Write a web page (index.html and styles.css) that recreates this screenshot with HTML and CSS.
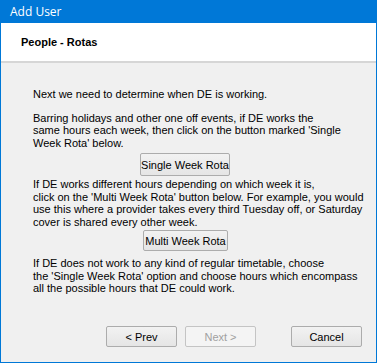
FILE: index.html
```html
<!DOCTYPE html>
<html>
<head>
    <meta charset="UTF-8">
    <title>Add User</title>
    <link rel="stylesheet" href="styles.css">
</head>
<body>
<div class="window">
    <div class="titlebar">Add User</div>

    <div class="header">
        <h1>People - Rotas</h1>
    </div>

    <div class="content">
        <p class="intro">Next we need to determine when DE is working.</p>

        <p>Barring holidays and other one off events, if DE works the<br>
            same hours each week, then click on the button marked 'Single<br>
            Week Rota' below.</p>

        <div class="row single">
            <button class="btn rota">Single Week Rota</button>
        </div>

        <p>If DE works different hours depending on which week it is,<br>
            click on the 'Multi Week Rota' button below. For example, you would<br>
            use this where a provider takes every third Tuesday off, or Saturday<br>
            cover is shared every other week.</p>

        <div class="row multi">
            <button class="btn rota">Multi Week Rota</button>
        </div>

        <p>If DE does not work to any kind of regular timetable, choose<br>
            the 'Single Week Rota' option and choose hours which encompass<br>
            all the possible hours that DE could work.</p>
    </div>

    <div class="footer">
        <button class="btn nav">&lt; Prev</button>
        <button class="btn nav" disabled>Next &gt;</button>
        <button class="btn nav cancel">Cancel</button>
    </div>
</div>
</body>
</html>
```

FILE: styles.css
```css
body {
    margin: 0;
    font-family: "Liberation Sans", Arial, sans-serif;
    background-color: #ffffff;
}

.window {
    width: 377px;
    height: 363px;
    box-sizing: border-box;
    border: 1px solid #0078d7;
    border-top: none;
    background-color: #f0f0f0;
    display: flex;
    flex-direction: column;
}

.titlebar {
    height: 23px;
    background-color: #0078d7;
    color: #ffffff;
    font-family: "Open Sans", "Noto Sans", sans-serif;
    font-size: 12px;
    line-height: 23px;
    padding-left: 9px;
}

.header {
    height: 38px;
    background-color: #ffffff;
    border-bottom: 2px solid #d6d6d6;
    display: flex;
    align-items: center;
    padding-left: 20px;
}

.header h1 {
    margin: 0;
    font-size: 11px;
    font-weight: bold;
    color: #000000;
}

.content {
    padding: 25px 0 0 32px;
    font-size: 11px;
    line-height: 12.5px;
    color: #000000;
}

.content p {
    margin: 0;
}

.intro {
    margin-bottom: 11px !important;
}

.row {
    display: flex;
}

.single {
    padding: 4px 0 2px 107px;
}

.multi {
    padding: 2px 0 6px 110px;
}

.btn {
    font-family: "Liberation Sans", Arial, sans-serif;
    font-size: 11px;
    color: #000000;
    background: linear-gradient(#f2f2f2, #e5e5e5);
    border: 1px solid #acacac;
    border-radius: 2px;
    padding: 0;
    height: 22px;
    white-space: nowrap;
}

.single .btn {
    width: 90px;
    height: 23px;
}

.multi .btn {
    width: 85px;
    height: 21px;
}

.footer {
    margin-top: auto;
    padding: 0 14px 15px 105px;
    display: flex;
    gap: 8px;
}

.nav {
    width: 71px;
    height: 21px;
}

.nav:disabled {
    color: #a0a0a0;
    background: #f4f4f4;
    border-color: #c4c4c4;
}

.cancel {
    margin-left: auto;
}
```
